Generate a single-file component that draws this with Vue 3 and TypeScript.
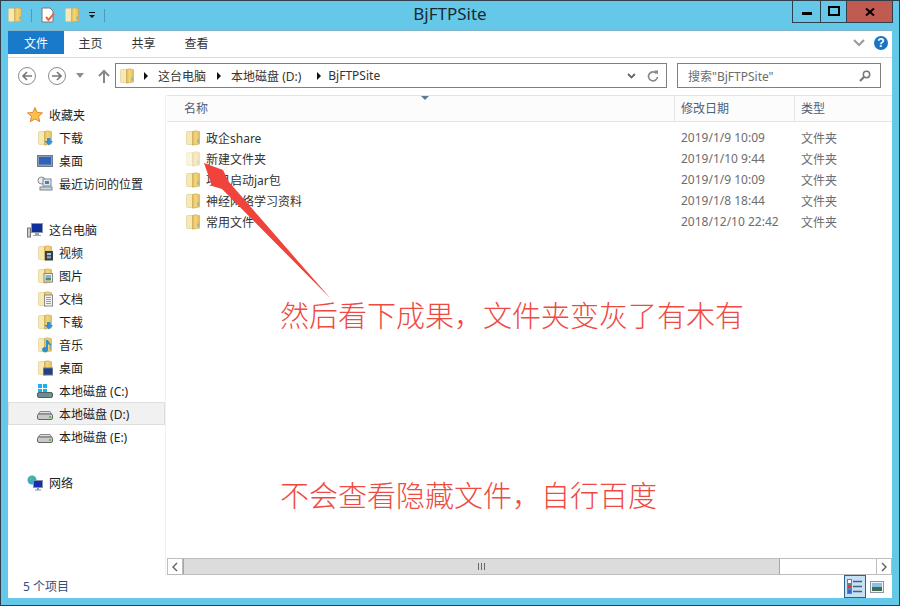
<script setup lang="ts">
type NavItem = { label: string; icon: string; indent?: boolean; active?: boolean };

const navGroups: NavItem[][] = [
  [
    { label: "收藏夹", icon: "star" },
    { label: "下载", icon: "dl", indent: true },
    { label: "桌面", icon: "desk", indent: true },
    { label: "最近访问的位置", icon: "recent", indent: true },
  ],
  [
    { label: "这台电脑", icon: "pc" },
    { label: "视频", icon: "video", indent: true },
    { label: "图片", icon: "pic", indent: true },
    { label: "文档", icon: "doc", indent: true },
    { label: "下载", icon: "dl", indent: true },
    { label: "音乐", icon: "music", indent: true },
    { label: "桌面", icon: "deskf", indent: true },
    { label: "本地磁盘 (C:)", icon: "sys", indent: true },
    { label: "本地磁盘 (D:)", icon: "disk", indent: true, active: true },
    { label: "本地磁盘 (E:)", icon: "disk", indent: true },
  ],
  [{ label: "网络", icon: "net" }],
];

const files = [
  { name: "政企share", date: "2019/1/9 10:09" },
  { name: "新建文件夹", date: "2019/1/10 9:44", hidden: true },
  { name: "项目启动jar包", date: "2019/1/9 10:09" },
  { name: "神经网络学习资料", date: "2019/1/8 18:44" },
  { name: "常用文件", date: "2018/12/10 22:42" },
];
</script>

<template>
  <div class="window">
    <svg class="defs" width="0" height="0">
      <defs>
        <linearGradient id="fold" x1="0" y1="0" x2="1" y2="0">
          <stop offset="0" stop-color="#dcb657" />
          <stop offset="0.4" stop-color="#f2d77f" />
          <stop offset="1" stop-color="#e6bf58" />
        </linearGradient>
        <symbol id="folder" viewBox="0 0 16 16">
          <path d="M1.500 2.500q0-1 1-1h5.500v13H2.500q-1 0-1-1z" fill="#f7e9b4" stroke="#dcc788" stroke-width=".6" />
          <path d="M7.500 1.500l3.200-.7 3.800.9v12.300l-7 1.200z" fill="url(#fold)" stroke="#c9a54e" stroke-width=".6" />
          <rect x="12.600" y="9.500" width="1" height="3" fill="#5aa7dd" />
        </symbol>
      </defs>
    </svg>

    <header class="titlebar">
      <div class="quick">
        <svg class="i16"><use href="#folder" /></svg>
        <i class="qsep"></i>
        <svg class="i16" viewBox="0 0 16 16">
          <path d="M2 1h8l3 3v11H2z" fill="#fff" stroke="#777" />
          <path d="M6 10l2.500 3L14 6.500" fill="none" stroke="#e0694a" stroke-width="2" />
        </svg>
        <svg class="i16"><use href="#folder" /></svg>
        <svg class="qdrop" viewBox="0 0 8 8"><path d="M1 1h6v1H1zM1 4h6L4 7z" fill="#111" /></svg>
        <i class="qsep"></i>
      </div>
      <div class="title">BjFTPSite</div>
      <div class="controls">
        <button class="ctl ctl-min"><i></i></button>
        <button class="ctl ctl-max"><i></i></button>
        <button class="ctl ctl-close">
          <svg viewBox="0 0 10 8" width="10" height="8"><path d="M1 .5l8 7M9 .5l-8 7" stroke="#000" stroke-width="2" fill="none" /></svg>
        </button>
      </div>
    </header>

    <main class="inner">
      <nav class="ribbon">
        <span class="tab tab-file">文件</span>
        <span class="tab">主页</span>
        <span class="tab">共享</span>
        <span class="tab">查看</span>
        <span class="ribbon-end">
          <svg width="12" height="8" viewBox="0 0 12 8"><path d="M1 1l5 5 5-5" fill="none" stroke="#9a9a9a" stroke-width="2" /></svg>
          <span class="help">?</span>
        </span>
      </nav>

      <section class="addressrow">
        <span class="round"><svg viewBox="0 0 12 12" width="12" height="12"><path d="M11 6H2M6 2L2 6l4 4" fill="none" stroke="#777" stroke-width="1.700" /></svg></span>
        <span class="round fwd"><svg viewBox="0 0 12 12" width="12" height="12"><path d="M1 6h9M6 2l4 4-4 4" fill="none" stroke="#777" stroke-width="1.700" /></svg></span>
        <svg class="hist" width="8" height="5" viewBox="0 0 8 5"><path d="M0 0h8L4 5z" fill="#8f8f8f" /></svg>
        <svg class="up" width="12" height="14" viewBox="0 0 12 14"><path d="M6 14V2M1 7l5-5 5 5" fill="none" stroke="#888" stroke-width="2" /></svg>
        <div class="address">
          <svg class="i16"><use href="#folder" /></svg>
          <span class="crumb-arrow first"></span><span class="crumb">这台电脑</span>
          <span class="crumb-arrow"></span><span class="crumb">本地磁盘 (D:)</span>
          <span class="crumb-arrow last"></span><span class="crumb">BjFTPSite</span>
          <span class="addr-end">
            <svg width="9" height="6" viewBox="0 0 9 6"><path d="M1 1l3.500 3.500L8 1" fill="none" stroke="#666" stroke-width="1.800" /></svg>
            <svg width="12" height="12" viewBox="0 0 12 12"><path d="M9.500 3.500A4.500 4.500 0 1 0 10.500 7" fill="none" stroke="#888" stroke-width="1.700" /><path d="M7 .5h4v4z" fill="#888" /></svg>
          </span>
        </div>
        <div class="search">
          <span>搜索"BjFTPSite"</span>
          <svg width="12" height="12" viewBox="0 0 12 12"><circle cx="7.500" cy="4.500" r="3.200" fill="none" stroke="#777" stroke-width="1.500" /><path d="M5 7l-4 4" stroke="#777" stroke-width="2.200" /></svg>
        </div>
      </section>

      <section class="panes">
        <aside class="sidebar">
          <div v-for="(group, g) in navGroups" :key="g" class="navgroup">
            <div v-for="item in group" :key="item.label" class="navitem" :class="{ indent: item.indent, active: item.active }">
              <svg class="i16" viewBox="0 0 16 16">
                <template v-if="item.icon === 'star'">
                  <path d="M8 .5l2.200 5 5.300.4-4 3.500 1.300 5.300L8 11.900l-4.800 2.800 1.300-5.300-4-3.500 5.300-.4z" fill="#fbc14a" stroke="#e2862e" />
                </template>
                <template v-else-if="item.icon === 'desk'">
                  <rect x=".5" y="2.500" width="15" height="11" fill="#8a9bb2" stroke="#6c7a8e" />
                  <rect x="2" y="4" width="12" height="7.500" fill="#2f62b8" />
                </template>
                <template v-else-if="item.icon === 'recent'">
                  <circle cx="4.500" cy="4.500" r="3.500" fill="#eee" stroke="#888" />
                  <rect x="6" y="3" width="8" height="7" fill="#dfe6ec" stroke="#7b8792" />
                  <rect x="3" y="11" width="12" height="3" fill="#cfd6dc" stroke="#7b8792" />
                  <rect x="8" y="5" width="4" height="3" fill="#4b7fb0" />
                </template>
                <template v-else-if="item.icon === 'pc'">
                  <rect x=".5" y="6" width="3" height="9" fill="#ccc" stroke="#777" />
                  <rect x="4.500" y="1.500" width="11" height="9" fill="#0f2f9a" stroke="#8b98a8" />
                  <path d="M8 11h4v2h2v1H6v-1h2z" fill="#9ca6b0" />
                </template>
                <template v-else-if="item.icon === 'sys'">
                  <rect x="1" y="1" width="4" height="4" fill="#13b4ef" /><rect x="6" y="1" width="4" height="4" fill="#13b4ef" />
                  <rect x="1" y="6" width="4" height="3" fill="#13b4ef" /><rect x="6" y="6" width="4" height="3" fill="#13b4ef" />
                  <rect x=".5" y="9.500" width="15" height="5" rx="1.500" fill="#6f8894" stroke="#4f5f68" />
                  <rect x="12" y="11.500" width="2" height="2" fill="#56c24f" />
                </template>
                <template v-else-if="item.icon === 'disk'">
                  <path d="M1.500 8L3 5.500h10L14.500 8z" fill="#e2e2e2" stroke="#8a8a8a" />
                  <rect x=".5" y="8" width="15" height="5.500" rx="1.500" fill="#c9c9c9" stroke="#666" />
                  <rect x="12" y="10" width="2" height="2" fill="#5cc14d" />
                </template>
                <template v-else-if="item.icon === 'net'">
                  <circle cx="5" cy="5" r="4.500" fill="#38a8d8" />
                  <path d="M2 3l3-2 1 3-3 2zM6 7l2-1 1 2-2 1z" fill="#5fbf4c" />
                  <rect x="6.500" y="5.500" width="9" height="7" fill="#1530b0" stroke="#8994a0" />
                  <path d="M10 13h2v1.500h2v1H8v-1h2z" fill="#8994a0" />
                </template>
                <template v-else>
                  <use href="#folder" />
                  <template v-if="item.icon === 'dl'">
                    <path d="M10 8h3.500v3H16l-4.200 4.500L7.500 11H10z" fill="#2f8fd8" />
                  </template>
                  <template v-else-if="item.icon === 'video'">
                    <rect x="8" y="6" width="8" height="9.500" fill="#33404a" />
                    <rect x="10" y="8" width="4" height="2.200" fill="#a9c7d6" />
                    <rect x="10" y="11.200" width="4" height="2.200" fill="#8aa5b5" />
                  </template>
                  <template v-else-if="item.icon === 'pic'">
                    <rect x="7" y="5.500" width="8.500" height="8.500" fill="#eee" stroke="#888" />
                    <rect x="8.500" y="7" width="5.500" height="3" fill="#7fb8dc" />
                    <rect x="8.500" y="10" width="5.500" height="2.500" fill="#58905d" />
                  </template>
                  <template v-else-if="item.icon === 'doc'">
                    <rect x="7.500" y="4" width="8" height="11" fill="#f3f3f3" stroke="#8a8a8a" />
                    <path d="M9 6.500h5M9 8.500h5M9 10.500h5M9 12.500h5" stroke="#8aa0b5" />
                  </template>
                  <template v-else-if="item.icon === 'music'">
                    <path d="M11 3v9.500a3 2.500 0 1 1-2-2.200V3zM11 3c1 3 4 3.500 3 7-.5-2-2-2.500-3-3z" fill="#2d8fd0" />
                  </template>
                  <template v-else-if="item.icon === 'deskf'">
                    <rect x="6.500" y="8" width="9" height="7" fill="#1f3f88" stroke="#6c7a8e" />
                  </template>
                </template>
              </svg>
              <span>{{ item.label }}</span>
            </div>
          </div>
        </aside>

        <section class="content">
          <div class="colhead">
            <span class="c-name">名称</span>
            <span class="c-date">修改日期</span>
            <span class="c-type">类型</span>
            <span class="sortcaret"></span>
          </div>
          <div class="filelist">
            <div v-for="f in files" :key="f.name" class="filerow">
              <div class="c-name">
                <svg class="i16" :class="{ faded: f.hidden }"><use href="#folder" /></svg>
                <span class="fname">{{ f.name }}</span>
              </div>
              <div class="c-date">{{ f.date }}</div>
              <div class="c-type">文件夹</div>
            </div>
          </div>
          <div class="hscroll">
            <span class="sbtn"><svg width="6" height="10" viewBox="0 0 6 10"><path d="M5 1L1 5l4 4" fill="none" stroke="#606060" stroke-width="1.400" /></svg></span>
            <span class="thumb"><i></i></span>
            <span class="track"></span>
            <span class="sbtn"><svg width="6" height="10" viewBox="0 0 6 10"><path d="M1 1l4 4-4 4" fill="none" stroke="#606060" stroke-width="1.400" /></svg></span>
          </div>
        </section>
      </section>

      <footer class="statusbar">
        <span class="count">5 个项目</span>
        <span class="views">
          <span class="view on">
            <svg width="16" height="16" viewBox="0 0 16 16">
              <rect x=".5" y=".5" width="4" height="4" fill="#fff" stroke="#6a7f96" /><rect x=".5" y="5.500" width="4" height="4" fill="#e33" stroke="#6a7f96" /><rect x=".5" y="10.500" width="4" height="4" fill="#36c" stroke="#6a7f96" />
              <path d="M6 2.500h9M6 7.500h9M6 12.500h9" stroke="#49617a" stroke-width="1.500" />
            </svg>
          </span>
          <span class="view">
            <svg width="14" height="12" viewBox="0 0 14 12">
              <rect x=".5" y=".5" width="13" height="11" fill="#eef3f6" stroke="#8a97a3" />
              <rect x="2" y="2" width="10" height="4" fill="#8cc0e6" />
              <rect x="2" y="6" width="10" height="4" fill="#3d6d52" />
            </svg>
          </span>
        </span>
      </footer>
    </main>

    <div class="note note-1">然后看下成果，文件夹变灰了有木有</div>
    <div class="note note-2">不会查看隐藏文件，自行百度</div>
    <svg class="arrow" width="900" height="606" viewBox="0 0 900 606">
      <path d="M204 163L223 170L229 182L331 299L222 189L212 186z" fill="#f0433b" />
    </svg>
  </div>
</template>

<style>
html, body { margin: 0; background: #fff; }
</style>

<style scoped>
.window {
  position: relative;
  width: 900px;
  height: 606px;
  box-sizing: border-box;
  border: 1px solid #2f3f4c;
  background: #65c8e9;
  display: flex;
  flex-direction: column;
  overflow: hidden;
  font-family: "Noto Sans", "Noto Sans CJK SC", sans-serif;
  font-size: 12px;
  color: #1e1e1e;
}
.defs { position: absolute; }
.i16 { width: 16px; height: 16px; flex: none; display: block; }
.faded { opacity: 0.45; }

.titlebar {
  height: 29px;
  flex: none;
  display: flex;
  align-items: flex-start;
  position: relative;
}
.quick {
  display: flex;
  align-items: center;
  gap: 8px;
  padding: 6px 0 0 6px;
}
.qsep { width: 1px; height: 13px; background: #4f9ab8; }
.qdrop { width: 8px; height: 8px; }
.title {
  position: absolute;
  left: 0;
  right: 0;
  top: 3px;
  text-align: center;
  font-size: 17px;
  line-height: 20px;
  color: #1a2a33;
}
.controls {
  position: absolute;
  right: 6px;
  top: 0;
  display: flex;
  height: 21px;
  border: solid #2f3f4c;
  border-width: 0 1px 1px;
}
.ctl {
  padding: 0;
  border: 0;
  background: none;
  display: flex;
  align-items: center;
  justify-content: center;
  width: 27px;
  border-left: 1px solid #2f3f4c;
}
.ctl:first-child { border-left: 0; }
.ctl-min i { width: 10px; height: 3px; background: #000; margin-top: 4px; }
.ctl-max { width: 26px; }
.ctl-max i { width: 8px; height: 6px; border: 2px solid #000; margin-top: -1px; }
.ctl-close { width: 46px; background: #c15a50; }

.inner {
  flex: 1;
  min-height: 0;
  margin: 0 7px 7px;
  background: #fff;
  display: flex;
  flex-direction: column;
  border-top: 1px solid #7fb3c9;
}
.ribbon {
  height: 26px;
  flex: none;
  display: flex;
  align-items: flex-start;
  border-bottom: 1px solid #dadbdc;
}
.tab { width: 53px; height: 23px; line-height: 26px; text-align: center; color: #333; }
.tab-file { width: 56px; background: #1979ca; color: #fff; }
.ribbon-end {
  margin-left: auto;
  display: flex;
  align-items: center;
  gap: 9px;
  padding: 5px 4px 0 0;
}
.help {
  width: 14px;
  height: 14px;
  border-radius: 50%;
  background: #1a74c6;
  color: #fff;
  font: bold 12px/14px "Liberation Sans", sans-serif;
  text-align: center;
}
.addressrow {
  height: 37px;
  flex: none;
  display: flex;
  align-items: center;
  box-sizing: border-box;
  padding: 0 11px 2px 10px;
}
.round {
  width: 18px;
  height: 18px;
  box-sizing: border-box;
  border: 1px solid #8b8b8b;
  border-radius: 50%;
  display: flex;
  align-items: center;
  justify-content: center;
}
.fwd { margin-left: 12px; }
.hist { margin-left: 10px; }
.up { margin-left: 14px; }
.address {
  margin-left: 5px;
  width: 552px;
  height: 25px;
  box-sizing: border-box;
  border: 1px solid #7f7f7f;
  display: flex;
  align-items: center;
  padding-left: 3px;
  color: #333;
}
.crumb-arrow {
  width: 0;
  height: 0;
  border-left: 4px solid #111;
  border-top: 4px solid transparent;
  border-bottom: 4px solid transparent;
  margin: 0 10px 0 11px;
}
.crumb-arrow.first { margin-left: 9px; }
.crumb-arrow.last { margin: 0 7px 0 16px; }
.addr-end {
  margin-left: auto;
  display: flex;
  align-items: center;
  gap: 11px;
  padding-right: 7px;
}
.search {
  margin-left: 10px;
  width: 204px;
  height: 25px;
  box-sizing: border-box;
  border: 1px solid #7f7f7f;
  display: flex;
  align-items: center;
  justify-content: space-between;
  padding: 0 9px 0 10px;
  color: #6d6d6d;
}

.panes { flex: 1; min-height: 0; display: flex; }
.sidebar {
  width: 158px;
  flex: none;
  box-sizing: border-box;
  padding-top: 8px;
  border-right: 1px solid #f0f0f0;
  margin-right: 1px;
  display: flex;
  flex-direction: column;
  gap: 23px;
}
.navitem {
  height: 23px;
  box-sizing: border-box;
  display: flex;
  align-items: center;
  gap: 6px;
  padding-left: 19px;
  white-space: nowrap;
}
.navitem.indent { padding-left: 29px; }
.navitem.active { background: #f1f1f1; box-shadow: inset 0 0 0 1px #dedede; }

.content { flex: 1; min-width: 0; display: flex; flex-direction: column; }
.colhead {
  height: 27px;
  flex: none;
  box-sizing: border-box;
  display: flex;
  align-items: center;
  position: relative;
  border-top: 1px solid #e4e4e4;
  border-bottom: 1px solid #e4e4e4;
  background: #fcfcfc;
  color: #4c607a;
}
.c-name { width: 507px; flex: none; box-sizing: border-box; padding-left: 17px; }
.c-date { width: 120px; flex: none; box-sizing: border-box; padding-left: 6px; }
.c-type { flex: 1; box-sizing: border-box; padding-left: 6px; }
.colhead .c-name { padding-bottom: 2px; }
.colhead .c-date, .colhead .c-type {
  align-self: stretch;
  display: flex;
  align-items: center;
  border-left: 1px solid #e4e4e4;
  padding-bottom: 2px;
}
.sortcaret {
  position: absolute;
  left: 254px;
  top: 0;
  width: 0;
  height: 0;
  border-top: 4px solid #5a7a9a;
  border-left: 4px solid transparent;
  border-right: 4px solid transparent;
}
.filelist { flex: 1; min-height: 0; padding-top: 5px; }
.filerow { height: 21px; display: flex; align-items: center; color: #6d6d6d; }
.filerow .c-date, .filerow .c-type { padding-left: 7px; }
.filerow .c-name {
  display: flex;
  align-items: center;
  gap: 5px;
  padding-left: 18px;
  color: #333;
}
.hscroll {
  height: 17px;
  flex: none;
  display: flex;
  box-sizing: border-box;
  border-top: 1px solid #bdbdbd;
  border-bottom: 1px solid #bdbdbd;
}
.sbtn {
  width: 16px;
  flex: none;
  display: flex;
  align-items: center;
  justify-content: center;
  border-left: 1px solid #bdbdbd;
  border-right: 1px solid #bdbdbd;
  box-sizing: border-box;
}
.thumb {
  width: 597px;
  flex: none;
  background: #dcdcdc;
  border-left: 1px solid #a6a6a6;
  border-right: 1px solid #a6a6a6;
  box-sizing: border-box;
  display: flex;
  align-items: center;
  justify-content: center;
}
.thumb i { width: 7px; height: 7px; background: repeating-linear-gradient(90deg, #666 0 1px, transparent 1px 3px); }
.track { flex: 1; }

.statusbar {
  height: 23px;
  flex: none;
  display: flex;
  align-items: stretch;
  justify-content: space-between;
  color: #33507a;
}
.count {
  line-height: 24px;
  padding: 0 4px 0 15px;
  width: 72px;
  box-sizing: border-box;
}
.views { display: flex; align-items: center; padding-right: 4px; }
.view { width: 22px; height: 100%; display: flex; align-items: center; justify-content: center; }
.view.on { background: #c4e1f6; box-sizing: border-box; border: 1px solid #2f6289; }

.note {
  position: absolute;
  left: 279px;
  font-family: "Noto Sans CJK SC", sans-serif;
  font-size: 29px;
  font-weight: 200;
  line-height: 36px;
  color: #ee4a42;
  white-space: nowrap;
}
.note-1 { top: 295px; }
.note-2 { top: 475px; }
.arrow { position: absolute; left: -1px; top: -1px; pointer-events: none; }
</style>
